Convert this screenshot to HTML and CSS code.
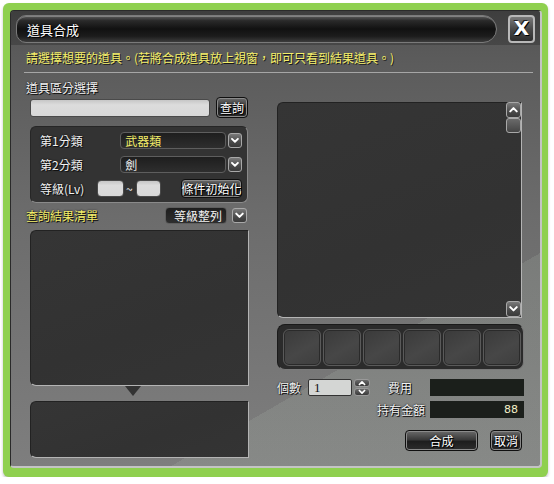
FILE: index.html
```html
<!DOCTYPE html>
<html lang="zh-Hant">
<head>
  <meta charset="UTF-8">
  <meta name="viewport" content="width=device-width, initial-scale=1.0">
  <title>道具合成</title>
  <link rel="stylesheet" href="styles.css">
</head>
<body>
  <div class="frame">
    <div class="dialog">
      <header class="dialog-head">
        <div class="titlebar">道具合成</div>
        <div class="close-btn">X</div>
      </header>

      <p class="notice">請選擇想要的道具。(若將合成道具放上視窗，即可只看到結果道具。)</p>
      <div class="sep"></div>

      <div class="columns">
        <section class="left-col">
          <div class="label">道具區分選擇</div>
          <div class="search-row">
            <div class="text-input search-input"></div>
            <div class="btn search-btn">查詢</div>
          </div>

          <div class="filter-box">
            <div class="filter-row">
              <span class="filter-label">第1分類</span>
              <div class="select yellow">武器類</div>
              <span class="arrow-btn"><svg viewBox="0 0 14 14"><polyline points="3.5,5 7,8.5 10.5,5"/></svg></span>
            </div>
            <div class="filter-row">
              <span class="filter-label">第2分類</span>
              <div class="select">劍</div>
              <span class="arrow-btn"><svg viewBox="0 0 14 14"><polyline points="3.5,5 7,8.5 10.5,5"/></svg></span>
            </div>
            <div class="filter-row">
              <span class="lv-label">等級(Lv)</span>
              <div class="text-input lv-min"></div>
              <span class="tilde">~</span>
              <div class="text-input lv-max"></div>
              <div class="btn reset-btn">條件初始化</div>
            </div>
          </div>

          <div class="result-head">
            <span class="yellow-label">查詢結果清單</span>
            <div class="select sort-select">等級整列</div>
            <span class="arrow-btn"><svg viewBox="0 0 14 14"><polyline points="3.5,5 7,8.5 10.5,5"/></svg></span>
          </div>

          <div class="panel result-list"></div>
          <div class="pointer"></div>
          <div class="panel result-detail"></div>
        </section>

        <section class="right-col">
          <div class="panel preview">
            <div class="scrollbar">
              <span class="scroll-btn"><svg viewBox="0 0 14 14"><polyline points="3.5,8.5 7,5 10.5,8.5"/></svg></span>
              <span class="scroll-thumb"></span>
              <span class="scroll-space"></span>
              <span class="scroll-btn"><svg viewBox="0 0 14 14"><polyline points="3.5,5 7,8.5 10.5,5"/></svg></span>
            </div>
          </div>

          <div class="slots">
            <div class="slot"></div>
            <div class="slot"></div>
            <div class="slot"></div>
            <div class="slot"></div>
            <div class="slot"></div>
            <div class="slot"></div>
          </div>

          <div class="info-row">
            <span class="info-label count-label">個數</span>
            <div class="text-input count-input">1</div>
            <span class="spinner">
              <span class="spin-half"><svg viewBox="0 0 14 8"><polyline points="3.5,6 7,2.5 10.5,6"/></svg></span>
              <span class="spin-half"><svg viewBox="0 0 14 8"><polyline points="3.5,2 7,5.5 10.5,2"/></svg></span>
            </span>
            <span class="info-label fee-label">費用</span>
            <div class="money-field"></div>
          </div>
          <div class="info-row">
            <span class="info-label own-label">持有金額</span>
            <div class="money-field">88</div>
          </div>

          <div class="actions">
            <div class="btn craft-btn">合成</div>
            <div class="btn cancel-btn">取消</div>
          </div>
        </section>
      </div>
    </div>
  </div>
</body>
</html>
```

FILE: styles.css
```css
* {
  margin: 0;
  padding: 0;
  box-sizing: border-box;
}

body {
  background: #ffffff;
  font-family: "Noto Sans CJK TC", "Noto Sans", sans-serif;
  font-size: 12px;
  color: #f2f2f2;
}

.frame {
  width: 545px;
  height: 474px;
  margin: 3px 0 0 3px;
  padding: 7px 6px 9px 7px;
  background: #8fd04f;
  border-radius: 6px;
  box-shadow: 0 2px 3px rgba(0, 0, 0, 0.25);
}

.dialog {
  width: 532px;
  height: 458px;
  border-radius: 4px;
  border-top: 1px solid #2a2a2a;
  border-left: 1px solid #2a2a2a;
  border-right: 2px solid #c4c4c4;
  border-bottom: 2px solid #c4c4c4;
  background:
    linear-gradient(150deg, rgba(0, 0, 0, 0) 72%, rgba(190, 205, 190, 0.14) 72%),
    linear-gradient(to bottom, #545454 0, #5c5c5c 12%, #6c6c6c 45%, #7e7e7e 100%);
  overflow: hidden;
}

/* header */
.dialog-head {
  display: flex;
  align-items: flex-start;
  height: 34px;
  padding: 4px 0 0 5px;
  background: linear-gradient(to bottom, #3e3e3e, #474747);
}

.titlebar {
  width: 481px;
  height: 28px;
  padding-left: 10px;
  line-height: 27px;
  font-size: 13px;
  color: #ffffff;
  text-shadow: 1px 1px 0 #000, 0 0 2px #000;
  border: 1px solid #7a7a7a;
  border-radius: 10px 14px 14px 10px;
  background: linear-gradient(to bottom, #5c5c5c 0, #2a2a2a 18%, #111111 50%, #1c1c1c 78%, #3c3c3c 100%);
  box-shadow: inset 0 1px 0 rgba(255, 255, 255, 0.25);
}

.close-btn {
  width: 27px;
  height: 28px;
  margin-left: 11px;
  border: 2px solid #b8b8b8;
  border-radius: 4px;
  background: linear-gradient(to bottom, #7a7a7a, #4a4a4a 50%, #2e2e2e);
  color: #ffffff;
  font-family: "DejaVu Sans", sans-serif;
  font-weight: bold;
  font-size: 20px;
  line-height: 23px;
  text-align: center;
  text-shadow: 1px 1px 0 #000, -1px -1px 0 #222;
}

/* notice */
.notice {
  padding: 5px 0 0 15px;
  height: 20px;
  line-height: 16px;
  color: #f4ef6a;
  text-shadow: 1px 1px 0 #1a1a1a;
  white-space: nowrap;
}

.sep {
  width: 509px;
  height: 1px;
  margin: 7px 0 0 13px;
  background: #a6a6a6;
}

.columns {
  display: flex;
  gap: 28px;
  padding-left: 15px;
}

.left-col {
  width: 223px;
  padding-top: 7px;
}

.right-col {
  width: 247px;
  padding-top: 29px;
}

.label,
.yellow-label,
.filter-label,
.lv-label,
.info-label {
  line-height: 16px;
  text-shadow: 1px 1px 0 #111, 0 0 2px #000;
  white-space: nowrap;
}

.label {
  height: 16px;
}

.yellow-label {
  color: #f4ef6a;
}

/* inputs */
.text-input {
  height: 18px;
  border: 1px solid #4a4a4a;
  border-radius: 3px;
  background: linear-gradient(to bottom, #c6c6c6, #dcdcdc 30%, #d8d8d8);
}

.search-row {
  display: flex;
  align-items: center;
  height: 21px;
  margin: 1px 0 0 4px;
}

.search-input {
  width: 180px;
}

.btn {
  display: flex;
  align-items: center;
  justify-content: center;
  color: #ffffff;
  text-shadow: 1px 1px 0 #000, 0 0 2px #000;
  border: 1px solid #101010;
  border-radius: 4px;
  background: linear-gradient(to bottom, #6a6a6a, #3a3a3a 45%, #1e1e1e 55%, #2c2c2c);
  box-shadow: inset 0 0 0 1px #8a8a8a;
  white-space: nowrap;
}

.search-btn {
  width: 32px;
  height: 21px;
  margin-left: 6px;
}

/* filter box */
.filter-box {
  width: 218px;
  height: 77px;
  margin: 8px 0 0 4px;
  padding: 5px 5px 0 9px;
  border-radius: 6px;
  background: #333333;
  border: 1px solid #262626;
  border-right-color: #8a8a8a;
  border-bottom-color: #8a8a8a;
}

.filter-row {
  display: flex;
  align-items: center;
  height: 17px;
  margin-bottom: 7px;
}

.filter-label {
  width: 81px;
}

.select {
  height: 17px;
  padding-left: 4px;
  line-height: 15px;
  border: 1px solid #5e5e5e;
  border-radius: 4px;
  background: linear-gradient(to bottom, #1e1e1e, #2e2e2e);
  white-space: nowrap;
}

.filter-row .select {
  width: 107px;
}

.select.yellow {
  color: #f4ef6a;
}

.arrow-btn,
.scroll-btn {
  display: flex;
  width: 14px;
  height: 15px;
  margin-left: 2px;
  border: 1px solid #a8a8a8;
  border-radius: 3px;
  background: linear-gradient(to bottom, #7a7a7a, #4a4a4a 60%, #3a3a3a);
}

.arrow-btn svg,
.scroll-btn svg,
.spin-half svg {
  width: 100%;
  height: 100%;
  fill: none;
  stroke: #ffffff;
  stroke-width: 2.2;
  stroke-linecap: round;
  stroke-linejoin: round;
}

.lv-label {
  width: 57px;
}

.lv-min {
  width: 27px;
  height: 17px;
  border-radius: 4px;
}

.tilde {
  width: 12px;
  padding-left: 2px;
  line-height: 16px;
}

.lv-max {
  width: 25px;
  height: 17px;
  border-radius: 4px;
}

.reset-btn {
  width: 61px;
  height: 19px;
  margin-left: 20px;
}

/* result list */
.result-head {
  display: flex;
  align-items: center;
  height: 17px;
  margin-top: 4px;
}

.result-head .yellow-label {
  width: 139px;
}

.sort-select {
  width: 62px;
  padding-left: 8px;
}

.result-head .arrow-btn {
  width: 15px;
  margin-left: 5px;
}

.panel {
  border-radius: 6px 0 0 6px;
  background: linear-gradient(160deg, #353535, #323232 60%, #343434);
  border: 1px solid #222222;
  border-right: 1px solid #b4b4b4;
  border-bottom: 1px solid #b4b4b4;
}

.result-list {
  width: 219px;
  height: 156px;
  margin: 6px 0 0 4px;
}

.pointer {
  width: 0;
  height: 0;
  margin-left: 99px;
  border-left: 8px solid transparent;
  border-right: 8px solid transparent;
  border-top: 10px solid #333333;
}

.result-detail {
  width: 219px;
  height: 57px;
  margin: 5px 0 0 4px;
}

/* preview */
.preview {
  display: flex;
  justify-content: flex-end;
  width: 245px;
  height: 216px;
  border-radius: 6px 0 0 6px;
}

.scrollbar {
  display: flex;
  flex-direction: column;
  width: 15px;
  margin-top: -1px;
}

.scrollbar .scroll-btn {
  margin-left: 0;
  width: 15px;
  height: 16px;
}

.scroll-thumb {
  height: 15px;
  border: 1px solid #a8a8a8;
  border-radius: 3px;
  background: linear-gradient(to bottom, #6a6a6a, #454545);
}

.scroll-space {
  flex: 1;
}

/* slots */
.slots {
  display: flex;
  gap: 2px;
  width: 247px;
  height: 46px;
  margin-top: 6px;
  padding: 4px 0 0 5px;
  border-radius: 8px;
  background: #2b2b2b;
  border: 1px solid #1a1a1a;
  border-right-color: #7a7a7a;
  border-bottom-color: #7a7a7a;
}

.slot {
  width: 38px;
  height: 37px;
  border: 1px solid #5a5a5a;
  border-radius: 6px;
  background: linear-gradient(150deg, #3a3a3a, #474747 55%, #3e3e3e);
  box-shadow: inset 0 0 0 1px #2a2a2a;
}

/* info rows */
.info-row {
  display: flex;
  align-items: center;
  height: 17px;
  margin-top: 9px;
}

.info-row + .info-row {
  margin-top: 5px;
  justify-content: flex-end;
}

.count-label {
  width: 31px;
}

.count-input {
  width: 44px;
  height: 17px;
  padding-left: 5px;
  border-radius: 2px;
  color: #111111;
  font-family: "Liberation Serif", serif;
  font-size: 13px;
  line-height: 15px;
  background: #d4d6d4;
  border: 1px solid #333;
}

.spinner {
  display: flex;
  flex-direction: column;
  width: 16px;
  height: 17px;
  margin-left: 2px;
}

.spin-half {
  display: flex;
  height: 8px;
  margin-bottom: 1px;
  border: 1px solid #9a9a9a;
  border-radius: 3px;
  background: linear-gradient(to bottom, #6a6a6a, #3a3a3a);
}

.fee-label {
  width: 42px;
  margin-left: 18px;
}

.own-label {
  margin-right: 5px;
}

.money-field {
  width: 94px;
  height: 17px;
  padding-right: 6px;
  line-height: 17px;
  text-align: right;
  font-family: "DejaVu Sans", sans-serif;
  font-size: 11px;
  color: #f2f0c8;
  background: #1b1f1b;
}

/* buttons */
.actions {
  display: flex;
  justify-content: flex-end;
  gap: 12px;
  margin: 12px 2px 0 0;
}

.craft-btn {
  width: 73px;
  height: 21px;
}

.cancel-btn {
  width: 32px;
  height: 21px;
}
```
